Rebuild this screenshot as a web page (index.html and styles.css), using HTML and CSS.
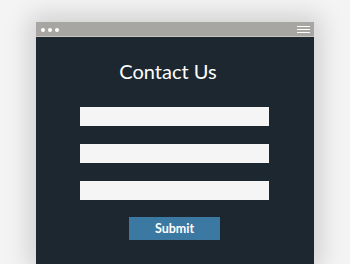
FILE: index.html
```html
<!DOCTYPE html>
<html>
<head>
<meta charset="utf-8">
<link rel="stylesheet" href="styles.css">
</head>
<body>
<div class="window">
  <div class="titlebar">
    <div class="dots"><span></span><span></span><span></span></div>
    <div class="menu"><span></span><span></span><span></span></div>
  </div>
  <div class="content">
    <h1 class="title">Contact Us</h1>
    <form class="form">
      <div class="field"></div>
      <div class="field"></div>
      <div class="field"></div>
      <div class="submit">Submit</div>
    </form>
  </div>
</div>
</body>
</html>
```
FILE: styles.css
```css
html, body {
  margin: 0;
  padding: 0;
  height: 100%;
  overflow: hidden;
}
body {
  background: #f4f4f4;
  font-family: Lato, "Open Sans", sans-serif;
  padding-top: 22px;
  box-sizing: border-box;
}
.window {
  margin-left: 36px;
  width: 278px;
  height: 100%;
  box-shadow: 0 0 24px 6px rgba(0, 0, 0, 0.16);
  display: flex;
  flex-direction: column;
}
.titlebar {
  height: 14px;
  flex: none;
  background: #a7a6a3;
  border-bottom: 1px solid #c6c5c2;
  display: flex;
  align-items: center;
  justify-content: space-between;
  padding: 0 4px 0 5px;
}
.dots {
  display: flex;
  gap: 3px;
  margin-top: 1px;
}
.dots span {
  width: 4px;
  height: 4px;
  border-radius: 50%;
  background: #ffffff;
}
.menu {
  display: flex;
  flex-direction: column;
  gap: 1.5px;
  width: 13px;
  margin-top: 1px;
}
.menu span {
  height: 1.5px;
  background: #ffffff;
}
.content {
  flex: 1;
  background: #1c2730;
  display: flex;
  flex-direction: column;
  align-items: center;
}
.title {
  margin: 0;
  padding-top: 22px;
  padding-right: 14px;
  height: 46px;
  box-sizing: border-box;
  font-size: 20px;
  line-height: 24px;
  font-weight: 400;
  color: #ffffff;
}
.form {
  margin-top: 24px;
  padding-right: 1px;
  display: flex;
  flex-direction: column;
  align-items: center;
  gap: 18px;
}
.field {
  width: 189px;
  height: 19px;
  background: #f5f5f5;
}
.submit {
  margin-top: -1px;
  width: 91px;
  height: 23px;
  background: #3b79a3;
  color: #ffffff;
  font-size: 12.5px;
  font-weight: 700;
  line-height: 23px;
  text-align: center;
}
```
